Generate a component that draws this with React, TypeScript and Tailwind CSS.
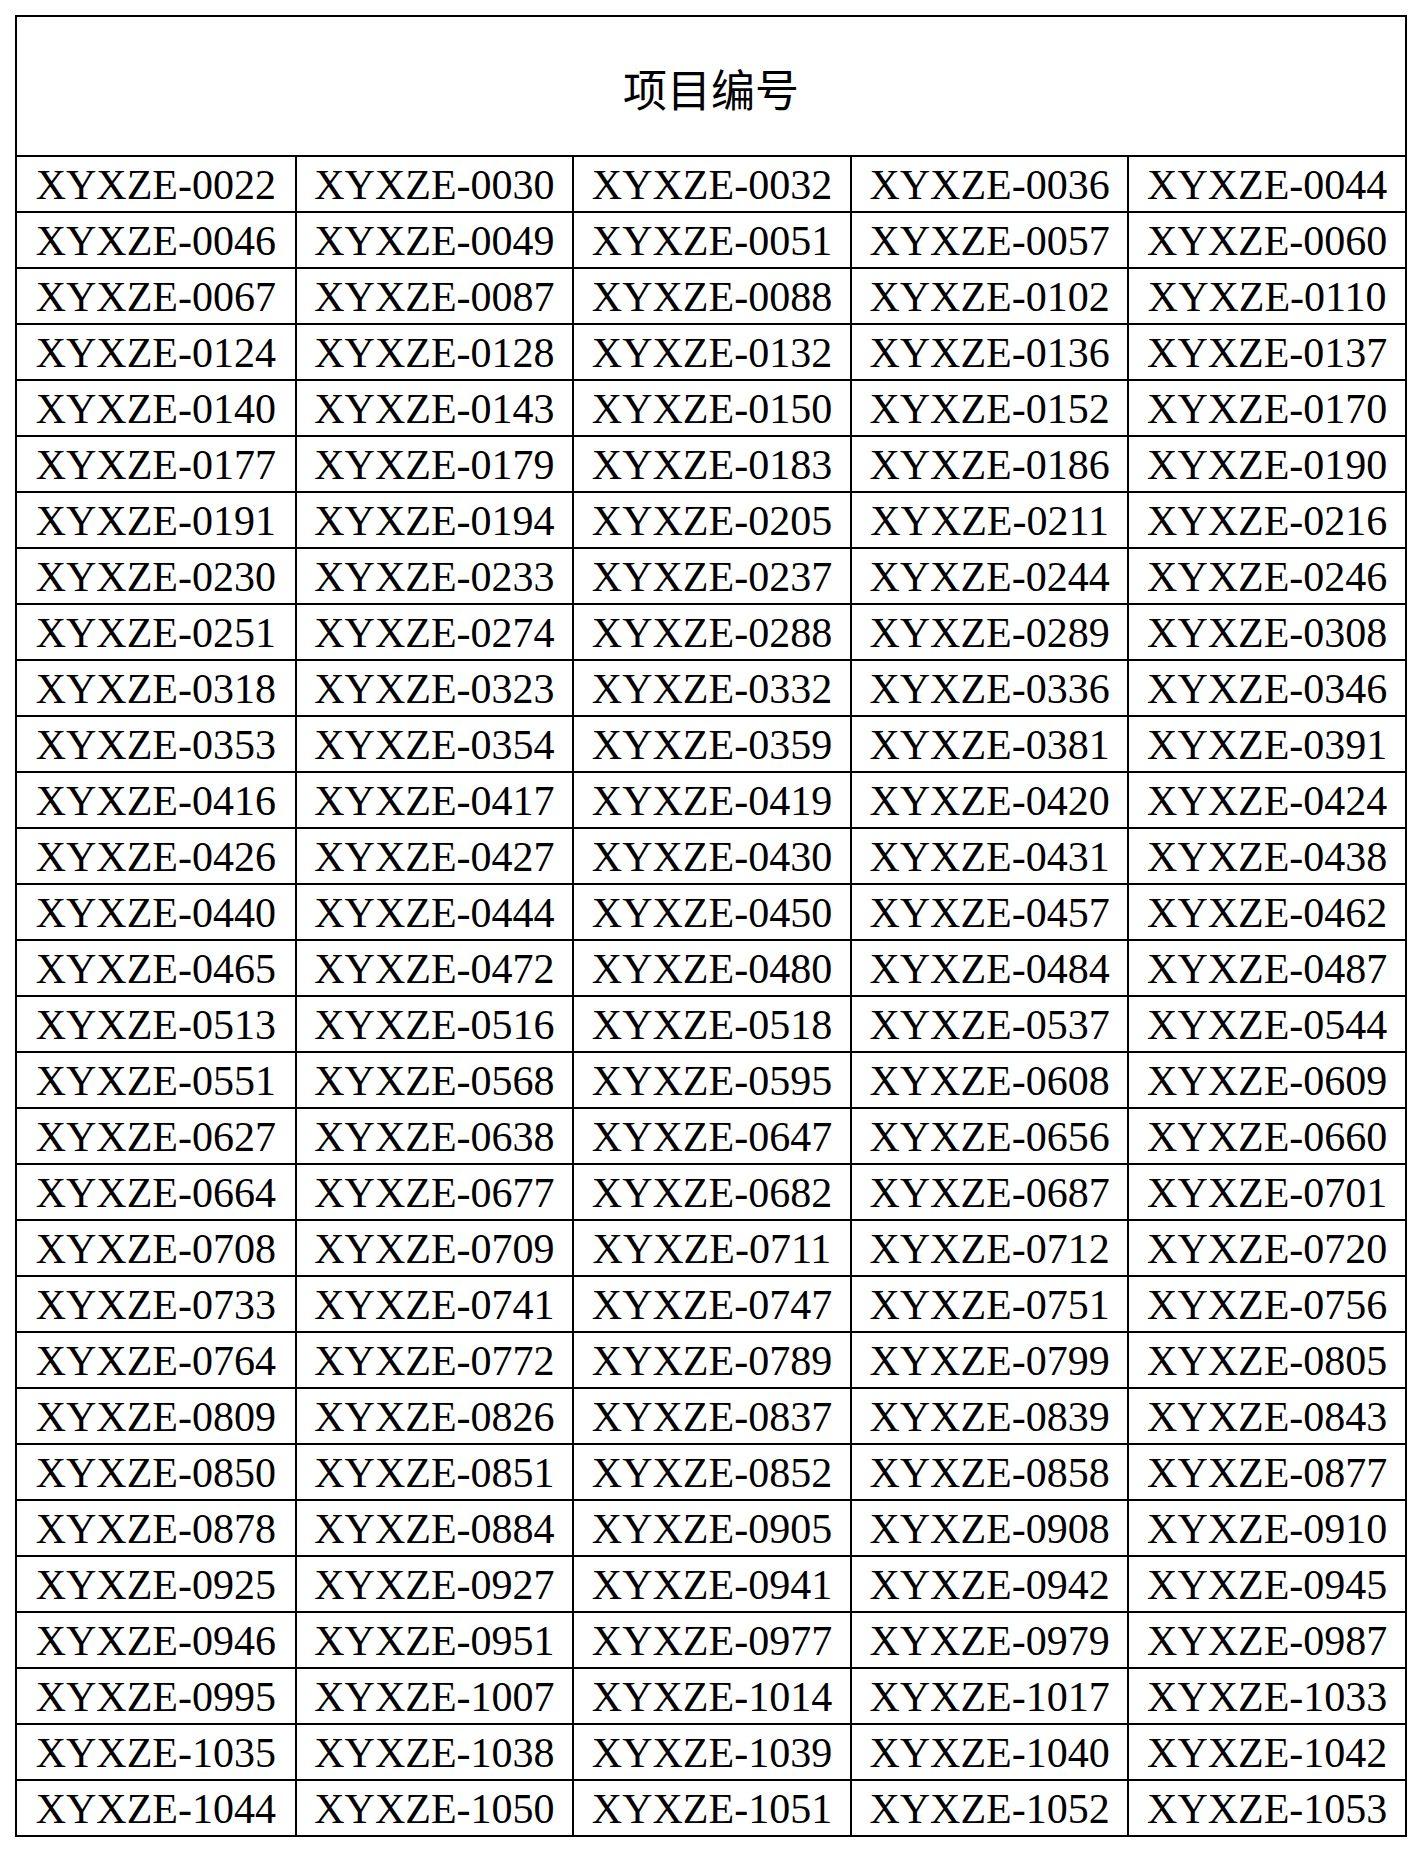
const codes = `
0022 0030 0032 0036 0044
0046 0049 0051 0057 0060
0067 0087 0088 0102 0110
0124 0128 0132 0136 0137
0140 0143 0150 0152 0170
0177 0179 0183 0186 0190
0191 0194 0205 0211 0216
0230 0233 0237 0244 0246
0251 0274 0288 0289 0308
0318 0323 0332 0336 0346
0353 0354 0359 0381 0391
0416 0417 0419 0420 0424
0426 0427 0430 0431 0438
0440 0444 0450 0457 0462
0465 0472 0480 0484 0487
0513 0516 0518 0537 0544
0551 0568 0595 0608 0609
0627 0638 0647 0656 0660
0664 0677 0682 0687 0701
0708 0709 0711 0712 0720
0733 0741 0747 0751 0756
0764 0772 0789 0799 0805
0809 0826 0837 0839 0843
0850 0851 0852 0858 0877
0878 0884 0905 0908 0910
0925 0927 0941 0942 0945
0946 0951 0977 0979 0987
0995 1007 1014 1017 1033
1035 1038 1039 1040 1042
1044 1050 1051 1052 1053
`
  .trim()
  .split('\n')
  .map((line) => line.trim().split(/\s+/));

export default function App() {
  return (
    <div className="min-h-screen bg-white pl-[15px] pt-[15px]">
      <div className="w-[1392px] border-2 border-black text-black">
        {/* Header */}
        <div
          className="flex h-[138px] items-center justify-center pt-[4px] text-[44px] leading-none"
          style={{ fontFamily: '"Noto Sans CJK SC", "Noto Sans", sans-serif' }}
        >
          项目编号
        </div>

        {/* Rows */}
        {codes.map((row, i) => (
          <div key={i} className="grid h-[56px] grid-cols-5 border-t-2 border-black">
            {row.map((c, j) => (
              <div
                key={c}
                className={`flex items-center justify-center pt-[2px] text-[42px] leading-none ${j > 0 ? 'border-l-2 border-black' : ''}`}
                style={{ fontFamily: '"Liberation Serif", "Times New Roman", serif' }}
              >
                XYXZE-{c}
              </div>
            ))}
          </div>
        ))}
      </div>
    </div>
  );
}
